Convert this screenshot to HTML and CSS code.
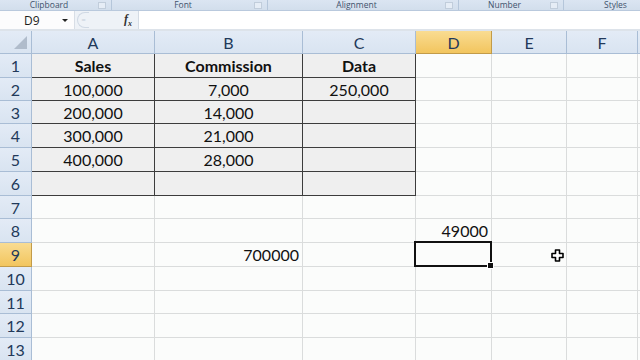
FILE: index.html
```html
<!DOCTYPE html>
<html lang="en">
<head>
    <meta charset="UTF-8">
    <meta name="viewport" content="width=device-width, initial-scale=1.0">
    <title>Book1 - Excel</title>
    <link rel="stylesheet" href="styles.css">
</head>
<body>
    <div class="ribbon-groups">
        <div class="group g-clip"><span class="label">Clipboard</span><span class="launcher"></span></div>
        <div class="group g-font"><span class="label">Font</span><span class="launcher"></span></div>
        <div class="group g-align"><span class="label">Alignment</span><span class="launcher"></span></div>
        <div class="group g-num"><span class="label">Number</span><span class="launcher"></span></div>
        <div class="group g-styles"><span class="label">Styles</span></div>
    </div>

    <div class="formula-bar">
        <div class="name-box">
            <span class="ref">D9</span>
            <span class="drop"></span>
        </div>
        <div class="fx-area">
            <span class="grip">=</span>
            <span class="fx">f<sub>x</sub></span>
        </div>
        <div class="formula-input"></div>
    </div>

    <table class="sheet">
        <colgroup>
            <col class="c-head">
            <col class="c-a">
            <col class="c-b">
            <col class="c-c">
            <col class="c-d">
            <col class="c-e">
            <col class="c-f">
            <col class="c-g">
        </colgroup>
        <tr class="head-row h23">
            <th class="corner"><span class="tri"></span></th>
            <th>A</th><th>B</th><th>C</th><th class="sel">D</th><th>E</th><th>F</th><th></th>
        </tr>
        <tr class="h24">
            <th class="rh">1</th>
            <td class="t bold">Sales</td><td class="t bold">Commission</td><td class="t bold">Data</td><td></td><td></td><td></td><td></td>
        </tr>
        <tr class="h23">
            <th class="rh">2</th>
            <td class="t">100,000</td><td class="t">7,000</td><td class="t">250,000</td><td></td><td></td><td></td><td></td>
        </tr>
        <tr class="h23">
            <th class="rh">3</th>
            <td class="t">200,000</td><td class="t">14,000</td><td class="t"></td><td></td><td></td><td></td><td></td>
        </tr>
        <tr class="h24">
            <th class="rh">4</th>
            <td class="t">300,000</td><td class="t">21,000</td><td class="t"></td><td></td><td></td><td></td><td></td>
        </tr>
        <tr class="h24">
            <th class="rh">5</th>
            <td class="t">400,000</td><td class="t">28,000</td><td class="t"></td><td></td><td></td><td></td><td></td>
        </tr>
        <tr class="h24">
            <th class="rh">6</th>
            <td class="t"></td><td class="t"></td><td class="t"></td><td></td><td></td><td></td><td></td>
        </tr>
        <tr class="h23">
            <th class="rh">7</th>
            <td></td><td></td><td></td><td></td><td></td><td></td><td></td>
        </tr>
        <tr class="h24">
            <th class="rh">8</th>
            <td></td><td></td><td></td><td class="num">49000</td><td></td><td></td><td></td>
        </tr>
        <tr class="h24">
            <th class="rh sel">9</th>
            <td></td><td class="num">700000</td><td></td><td class="active"></td>
            <td class="cursor-cell">
                <svg class="cursor" width="13" height="13" viewBox="0 0 13 13">
                    <path d="M4.5 1h4v3.5h3.5v4H8.5V12h-4V8.5H1v-4h3.5z" fill="#fff" stroke="#000" stroke-width="1.6" stroke-linejoin="round"/>
                </svg>
            </td>
            <td></td><td></td>
        </tr>
        <tr class="h24">
            <th class="rh">10</th>
            <td></td><td></td><td></td><td></td><td></td><td></td><td></td>
        </tr>
        <tr class="h23">
            <th class="rh">11</th>
            <td></td><td></td><td></td><td></td><td></td><td></td><td></td>
        </tr>
        <tr class="h24">
            <th class="rh">12</th>
            <td></td><td></td><td></td><td></td><td></td><td></td><td></td>
        </tr>
        <tr class="h23">
            <th class="rh">13</th>
            <td></td><td></td><td></td><td></td><td></td><td></td><td></td>
        </tr>
    </table>
</body>
</html>
```

FILE: styles.css
```css
body {
    margin: 0;
    width: 640px;
    height: 360px;
    overflow: hidden;
    background-color: #fbfcfb;
    font-family: Lato, "Open Sans", sans-serif;
}

/* ribbon group captions along the top edge */
.ribbon-groups {
    display: flex;
    height: 10px;
    background: linear-gradient(#dbe5f2, #d2deec);
    border-bottom: 1px solid #b9c9dd;
}

.group {
    display: flex;
    align-items: center;
    flex-shrink: 0;
    border-right: 1px solid #b5c6da;
    box-sizing: border-box;
    padding-right: 5px;
}

.g-clip { width: 112px; }
.g-font { width: 156px; }
.g-align { width: 191px; }
.g-num { width: 105px; }
.g-styles { width: 76px; border-right: none; padding-left: 40px; padding-right: 0; }

.label {
    flex: 1;
    text-align: center;
    font-family: "Open Sans", sans-serif;
    font-size: 8.5px;
    line-height: 10px;
    height: 10px;
    color: #3f526c;
    white-space: nowrap;
}

.g-styles .label {
    flex: none;
}

.launcher {
    width: 6px;
    height: 5px;
    border: 1px solid #c1cddb;
    background-color: #e6edf6;
}

/* formula bar */
.formula-bar {
    display: flex;
    height: 18px;
    background-color: #fcfcfd;
    border-bottom: 2px solid #dde3ea;
}

.name-box {
    width: 75px;
    display: flex;
    align-items: center;
    border-right: 1px solid #d8dee6;
    box-sizing: border-box;
}

.ref {
    flex: 1;
    padding-left: 24px;
    font-family: "Open Sans", sans-serif;
    font-size: 12px;
    color: #1c1c1c;
}

.drop {
    width: 0;
    height: 0;
    margin-right: 6px;
    border-left: 3px solid transparent;
    border-right: 3px solid transparent;
    border-top: 3px solid #222;
}

.fx-area {
    width: 64px;
    display: flex;
    align-items: center;
    background-color: #eef2f7;
    border-right: 1px solid #d4dbe4;
    box-sizing: border-box;
}

.grip {
    width: 11px;
    height: 14px;
    margin-left: 2px;
    border: 1px solid #d0d9e4;
    border-right: none;
    border-radius: 8px 0 0 8px;
    font-size: 8px;
    line-height: 13px;
    color: #c5cfdb;
    text-align: center;
}

.fx {
    margin-left: auto;
    margin-right: 6px;
    font-family: "Liberation Serif", serif;
    font-style: italic;
    font-weight: bold;
    font-size: 12px;
    color: #333;
}

.fx sub {
    font-size: 8px;
}

.formula-input {
    flex: 1;
    background-color: #fff;
}

/* worksheet grid */
.sheet {
    border-collapse: separate;
    border-spacing: 0;
    table-layout: fixed;
    width: 680px;
    font-size: 16px;
    color: #111;
}

.c-head { width: 32px; }
.c-a { width: 123px; }
.c-b { width: 148px; }
.c-c { width: 113px; }
.c-d { width: 76px; }
.c-e { width: 75px; }
.c-f { width: 71px; }
.c-g { width: 42px; }

.h23 { height: 23px; }
.h24 { height: 24px; }

th,
td {
    padding: 0;
    box-sizing: border-box;
    border-right: 1px solid #dadcdc;
    border-bottom: 1px solid #dadcdc;
    white-space: nowrap;
}

th {
    font-weight: normal;
    color: #22395a;
    background: linear-gradient(#e3ebf6, #d9e4f1);
    border-right-color: #a9bdd5;
    border-bottom-color: #a9bdd5;
    text-align: center;
    font-size: 16px;
}

.head-row th {
    padding-top: 1px;
}

th.sel {
    background: linear-gradient(#f9dc92, #f2c55e);
    border-color: #c29b49;
}

.corner {
    position: relative;
}

.tri {
    position: absolute;
    right: 4px;
    bottom: 4px;
    width: 0;
    height: 0;
    border-left: 13px solid transparent;
    border-bottom: 13px solid #b0bccb;
}

td {
    background-color: #fbfcfb;
}

td.t {
    background-color: #efefef;
    border-right-color: #3c3c3c;
    border-bottom-color: #3c3c3c;
    text-align: center;
}

td.bold {
    font-weight: bold;
}

td.num {
    text-align: right;
    padding-right: 3px;
}

td.active {
    position: relative;
}

td.active::after {
    content: "";
    position: absolute;
    left: -2px;
    top: -2px;
    right: -1px;
    bottom: -1px;
    border: 2px solid #111;
}

td.active::before {
    content: "";
    position: absolute;
    right: -3px;
    bottom: -3px;
    width: 5px;
    height: 5px;
    background-color: #111;
    border: 1px solid #fff;
    z-index: 1;
}

.cursor-cell {
    position: relative;
}

.cursor {
    position: absolute;
    left: 59px;
    top: 6px;
}
```
